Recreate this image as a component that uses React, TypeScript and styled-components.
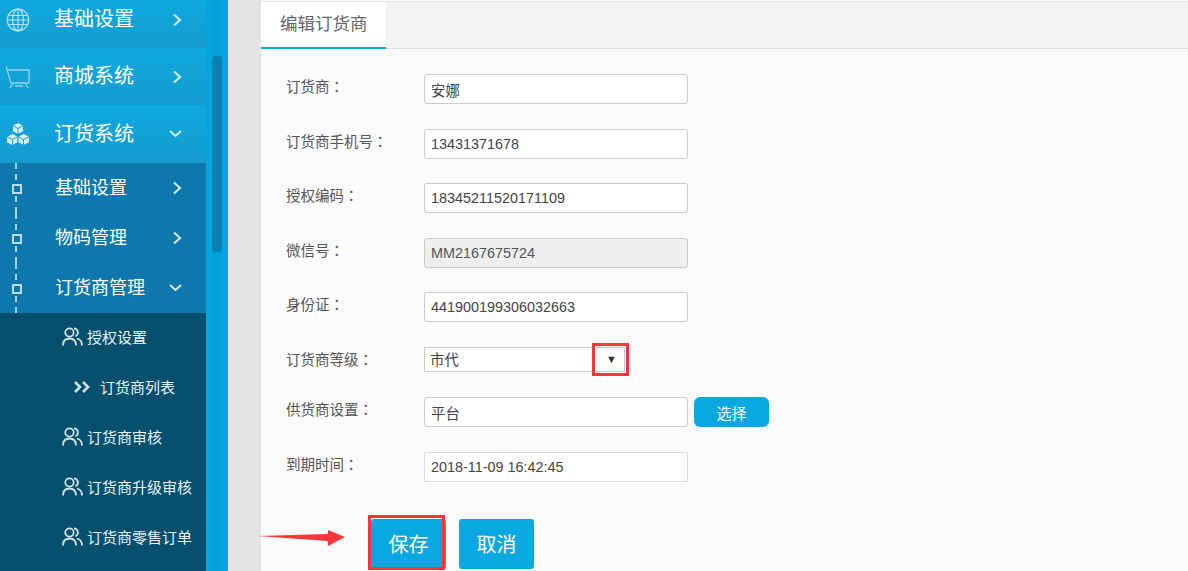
import React from "react";
import styled, { createGlobalStyle } from "styled-components";

const GlobalStyle = createGlobalStyle`
  html, body {
    margin: 0;
    padding: 0;
    height: 100%;
    overflow: hidden;
    background: #e4e4e4;
    font-family: "Liberation Sans", "Noto Sans CJK SC", sans-serif;
  }
  * {
    box-sizing: border-box;
  }
`;

const GlobeIcon = () => (
  <svg width="24" height="24" viewBox="0 0 24 24" fill="none" stroke="#b5e2f4" strokeWidth="1.2">
    <circle cx="12" cy="12" r="10.8" />
    <ellipse cx="12" cy="12" rx="5.500" ry="10.800" />
    <path d="M12 1.200v21.600M2.500 7.500h19M1.500 12h21M2.500 16.500h19" />
  </svg>
);

const CartIcon = () => (
  <svg width="24" height="24" viewBox="0 0 24 24" fill="none" stroke="#8fd2ec" strokeWidth="1.400">
    <path d="M0 1l5 17h18V5H2" />
    <path d="M4 23l3-5M22 23l-3-5M9 21h8" />
  </svg>
);

const CubesIcon = () => (
  <svg width="24" height="24" viewBox="0 0 24 24" fill="#d3eefa" stroke="#1597c9" strokeWidth="0.900">
    <path d="M12 .5l5.500 3v6L12 12.500l-5.500-3v-6z" />
    <path d="M6.500 11.500l5.500 3v6l-5.500 3-6-3v-6z" />
    <path d="M17.500 11.500l6 3v6l-6 3-5.500-3v-6z" />
    <path d="M6.500 3.500L12 6.500l5.500-3M12 6.500v6M.5 14.500l6 3 5.500-3M6.500 17.500v6M12 14.500l5.500 3 6-3M17.500 17.500v6" fill="none" />
  </svg>
);

const UsersIcon = () => (
  <svg width="21" height="19" viewBox="0 0 21 19" fill="none" stroke="#d3e2e9" strokeWidth="1.800">
    <circle cx="7.500" cy="5.500" r="4.200" />
    <path d="M1 18.500c0-4.500 2.500-7 6.500-7s6.500 2.500 6.500 7" />
    <path d="M12 1.300a4.200 4.200 0 0 1 1.500 8" />
    <path d="M15 11.500c3 .8 5 3 5 7" />
  </svg>
);

const DoubleChevron = () => (
  <svg width="17" height="12" viewBox="0 0 17 12" fill="none" stroke="#d3e2e9" strokeWidth="2.600">
    <path d="M1 1l5 5-5 5M9 1l5 5-5 5" />
  </svg>
);

const Chevron = ({ open }: { open?: boolean }) => (
  <ChevronBox>
    {open ? (
      <svg width="13" height="8" viewBox="0 0 13 8" fill="none" stroke="#d5eef8" strokeWidth="2">
        <path d="M1 1l5.500 5 5.500-5" />
      </svg>
    ) : (
      <svg width="9" height="13" viewBox="0 0 9 13" fill="none" stroke="#d5eef8" strokeWidth="2">
        <path d="M1 1l6 5.500-6 5.500" />
      </svg>
    )}
  </ChevronBox>
);

const mainMenu = [
  { name: "基础设置", icon: <GlobeIcon />, height: 48, open: false, clipped: true },
  { name: "商城系统", icon: <CartIcon />, height: 57, open: false, clipped: false },
  { name: "订货系统", icon: <CubesIcon />, height: 58, open: true, clipped: false },
];

const subMenu = [
  { name: "基础设置", open: false },
  { name: "物码管理", open: false },
  { name: "订货商管理", open: true },
];

const leafMenu = [
  { name: "授权设置", current: false },
  { name: "订货商列表", current: true },
  { name: "订货商审核", current: false },
  { name: "订货商升级审核", current: false },
  { name: "订货商零售订单", current: false },
];

export default function App() {
  return (
    <Wrap>
      <GlobalStyle />
      <Sidebar>
        <Menu>
          {mainMenu.map((item) => (
            <MainItem key={item.name} $height={item.height} $clipped={item.clipped}>
              <MainIcon>{item.icon}</MainIcon>
              <span>{item.name}</span>
              <Chevron open={item.open} />
            </MainItem>
          ))}
          {subMenu.map((item) => (
            <SubItem key={item.name}>
              <TreeLine>
                <TreeNode />
              </TreeLine>
              <span>{item.name}</span>
              <Chevron open={item.open} />
            </SubItem>
          ))}
          {leafMenu.map((item) => (
            <LeafItem key={item.name} $current={item.current}>
              {item.current ? <DoubleChevron /> : <UsersIcon />}
              <span>{item.name}</span>
            </LeafItem>
          ))}
        </Menu>
        <ScrollTrack>
          <ScrollThumb />
        </ScrollTrack>
      </Sidebar>
      <Panel>
        <TabBar>
          <Tab>编辑订货商</Tab>
        </TabBar>
        <Form>
          <Row>
            <Label>订货商：</Label>
            <Input defaultValue="安娜" />
          </Row>
          <Row>
            <Label>订货商手机号：</Label>
            <Input defaultValue="13431371678" />
          </Row>
          <Row>
            <Label>授权编码：</Label>
            <Input defaultValue="18345211520171109" />
          </Row>
          <Row>
            <Label>微信号：</Label>
            <Input defaultValue="MM2167675724" disabled />
          </Row>
          <Row>
            <Label>身份证：</Label>
            <Input defaultValue="441900199306032663" />
          </Row>
          <Row>
            <Label>订货商等级：</Label>
            <SelectBox>
              <span>市代</span>
              <SelectArrow>▼</SelectArrow>
              <RedFrame />
            </SelectBox>
          </Row>
          <Row>
            <Label>供货商设置：</Label>
            <Input defaultValue="平台" />
            <PickButton>选择</PickButton>
          </Row>
          <Row>
            <Label>到期时间：</Label>
            <DateInput defaultValue="2018-11-09 16:42:45" />
          </Row>
          <Actions>
            <SaveHolder>
              <ArrowMark width="88" height="18" viewBox="0 0 88 18">
                <path d="M0 7L70 5V1L87 8L70 17V12Z" fill="#f8363a" />
              </ArrowMark>
              <ActionButton>保存</ActionButton>
              <SaveFrame />
            </SaveHolder>
            <ActionButton>取消</ActionButton>
          </Actions>
        </Form>
      </Panel>
    </Wrap>
  );
}

const Wrap = styled.div`
  display: flex;
  height: 571px;
  width: 1188px;
  overflow: hidden;
  background: #e4e4e4;
`;

const Sidebar = styled.aside`
  display: flex;
  width: 228px;
  height: 571px;
  flex-shrink: 0;
  background: #04a5df;
`;

const Menu = styled.nav`
  width: 206px;
  flex-shrink: 0;
  background: #064f6d;
`;

const ChevronBox = styled.span`
  position: absolute;
  right: 24px;
  top: 50%;
  transform: translateY(-50%);
  display: flex;
`;

const MainIcon = styled.span`
  position: absolute;
  left: 6px;
  top: 50%;
  transform: translateY(-50%);
  display: flex;
`;

const MainItem = styled.div<{ $height: number; $clipped: boolean }>`
  position: relative;
  display: flex;
  align-items: center;
  height: ${(p) => p.$height}px;
  padding-left: 54px;
  padding-bottom: ${(p) => (p.$clipped ? 13 : 4)}px;
  color: #fff;
  font-size: 20px;
  background: linear-gradient(#0fa9df, #159ccf);

  ${MainIcon}, ${ChevronBox} {
    top: ${(p) => (p.$clipped ? "42%" : "50%")};
  }
`;

const SubItem = styled.div`
  position: relative;
  display: flex;
  align-items: center;
  height: 50px;
  padding-left: 55px;
  padding-bottom: 4px;
  color: #fff;
  font-size: 18px;
  background: #0e78ad;
`;

const TreeLine = styled.span`
  position: absolute;
  left: 15px;
  top: 0;
  bottom: 0;
  border-left: 2px dashed #a5d3ea;
`;

const TreeNode = styled.i`
  position: absolute;
  left: -5px;
  top: 21px;
  width: 10px;
  height: 10px;
  background: #0e78ad;
  border: 2px solid #b5dcef;
`;

const LeafItem = styled.div<{ $current: boolean }>`
  display: flex;
  align-items: center;
  height: 50px;
  gap: ${(p) => (p.$current ? "9px" : "4px")};
  padding-left: ${(p) => (p.$current ? "74px" : "62px")};
  padding-bottom: 3px;
  color: #eaf3f7;
  font-size: 15px;
  background: #064f6d;
`;

const ScrollTrack = styled.div`
  width: 10px;
  margin-left: 6px;
  padding-top: 56px;
  background: #06a0d8;
`;

const ScrollThumb = styled.div`
  height: 196px;
  border-radius: 4px;
  background: #0a80b2;
`;

const Panel = styled.main`
  width: 927px;
  margin-left: 33px;
  height: 571px;
  flex-shrink: 0;
  background: #fbfbfb;
`;

const TabBar = styled.div`
  margin-top: 1px;
  height: 48px;
  background: #f3f3f3;
  border-top: 1px solid #e4e4e4;
  border-bottom: 1px solid #dcdcdc;
`;

const Tab = styled.div`
  width: 125px;
  height: 47px;
  padding: 11px 0 0 19px;
  color: #666;
  font-size: 17.500px;
  line-height: 22px;
  background: #fff;
  border-bottom: 2px solid #09a8e0;
`;

const Form = styled.form`
  display: flex;
  flex-direction: column;
  gap: 24.500px;
  padding: 25px 0 0 25px;
`;

const Row = styled.div`
  display: flex;
  align-items: flex-start;
`;

const Label = styled.label`
  width: 138px;
  flex-shrink: 0;
  color: #555;
  font-family: "Liberation Sans", "Noto Sans CJK TC", sans-serif;
  font-size: 14.500px;
  line-height: 26px;
`;

const Input = styled.input`
  width: 264px;
  height: 30px;
  padding: 0 6px;
  color: #444;
  font-family: inherit;
  font-size: 14.400px;
  background: #fff;
  border: 1px solid #ccc;
  border-radius: 3px;
  outline: none;

  &:disabled {
    color: #555;
    background: #eee;
  }
`;

const DateInput = styled(Input)`
  border: 1px solid #ddd;
  border-radius: 0;
`;

const SelectBox = styled.div`
  position: relative;
  display: flex;
  align-items: center;
  width: 201px;
  height: 25px;
  padding: 0 0 2px 5px;
  color: #444;
  font-size: 14.400px;
  background: #fff;
  border: 1px solid #ccc;
`;

const SelectArrow = styled.span`
  position: absolute;
  right: 7px;
  top: 4px;
  color: #333;
  font-size: 11px;
  line-height: 15px;
`;

const RedFrame = styled.i`
  position: absolute;
  right: -5px;
  top: -5px;
  width: 37px;
  height: 33px;
  border: 3px solid #f8363a;
`;

const PickButton = styled.button`
  width: 75px;
  height: 30px;
  margin-left: 6px;
  padding: 0;
  color: #fff;
  font-family: inherit;
  font-size: 15px;
  background: #09a8e0;
  border: none;
  border-radius: 6px;
`;

const Actions = styled.div`
  display: flex;
  gap: 13px;
  margin-top: 12.500px;
  padding-left: 85px;
`;

const SaveHolder = styled.div`
  position: relative;
  display: flex;
`;

const SaveFrame = styled.i`
  position: absolute;
  left: -3px;
  top: -4px;
  width: 77px;
  height: 55px;
  border: 3px solid #f8363a;
`;

const ArrowMark = styled.svg`
  position: absolute;
  left: -113px;
  top: 10px;
`;

const ActionButton = styled.button`
  width: 75px;
  height: 50px;
  padding: 0;
  color: #fff;
  font-family: inherit;
  font-size: 20px;
  background: #09a8e0;
  border: none;
  border-radius: 3px;
`;
